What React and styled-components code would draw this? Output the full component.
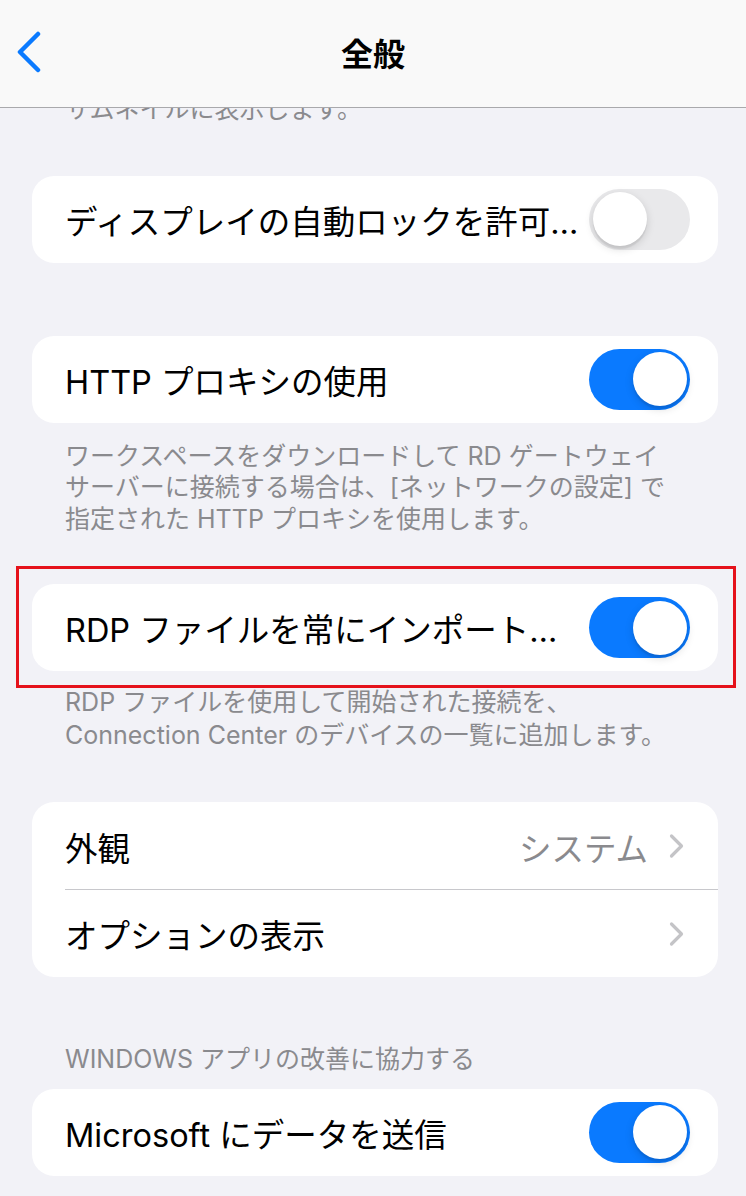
import React from "react";
import styled, { createGlobalStyle } from "styled-components";

const Global = createGlobalStyle`
  html, body { margin: 0; padding: 0; background: #f2f2f7; }
  body { font-family: "Inter", "Noto Sans CJK JP", sans-serif; -webkit-font-smoothing: antialiased; }
  * { box-sizing: border-box; }
`;

const Page = styled.div`
  width: 746px;
  height: 1196px;
  display: flex;
  flex-direction: column;
  background: #f2f2f7;
  overflow: hidden;
`;

const NavBar = styled.header`
  height: 108px;
  flex: none;
  display: grid;
  grid-template-columns: 80px 1fr 80px;
  align-items: center;
  background: #f9f9f9;
  border-bottom: 1px solid #a9a9ac;
  padding-bottom: 4px;
`;

const BackButton = styled.button`
  border: 0;
  background: none;
  padding: 0 0 0 16px;
  display: flex;
  align-items: center;
  height: 40px;
  cursor: pointer;
`;

const Title = styled.h1`
  margin: 0;
  text-align: center;
  font-size: 32px;
  font-weight: 700;
  color: #000;
  letter-spacing: 0;
`;

const Content = styled.main`
  flex: 1;
  overflow: hidden;
  display: flex;
  flex-direction: column;
  padding: 0 28px 0 32px;
`;

const Card = styled.section`
  background: #fff;
  border-radius: 22px;
  display: flex;
  flex-direction: column;
  margin-top: ${(p) => p.$mt ?? 0}px;
  overflow: hidden;
`;

const Row = styled.div`
  height: ${(p) => (p.$divider ? 88 : 87)}px;
  display: flex;
  align-items: center;
  padding: 0 ${(p) => (p.$chevron ? 33 : 28)}px 0 33px;
  position: relative;
  ${(p) =>
    p.$divider &&
    `&::after { content: ""; position: absolute; left: 33px; right: 0; bottom: 0; height: 1px; background: #c8c8cc; }`}
`;

const Label = styled.span`
  flex: 1;
  min-width: 0;
  font-size: 32.5px;
  color: #000;
  white-space: nowrap;
  overflow: hidden;
`;

const Value = styled.span`
  font-size: 32.5px;
  color: #8a8a8e;
  margin-right: 20px;
  white-space: nowrap;
`;

const Track = styled.div`
  flex: none;
  width: 101px;
  height: 61px;
  border-radius: 31px;
  background: ${(p) => (p.$on ? "#0a7aff" : "#e9e9eb")};
  padding: 3.5px;
  display: flex;
  justify-content: ${(p) => (p.$on ? "flex-end" : "flex-start")};
`;

const Knob = styled.div`
  width: 54px;
  height: 54px;
  border-radius: 50%;
  background: #fff;
  box-shadow: 0 3px 8px rgba(0, 0, 0, 0.15), 0 3px 1px rgba(0, 0, 0, 0.06);
`;

const Footnote = styled.p`
  margin: ${(p) => p.$mt ?? 0}px 0 0 0;
  padding: 0 20px 0 33px;
  font-size: 25px;
  line-height: ${(p) => p.$lh ?? 31.5}px;
  color: #8a8a8e;
`;

const SectionHeader = styled.h2`
  margin: ${(p) => p.$mt}px 0 0 0;
  padding: 0 0 0 33px;
  font-size: 25px;
  line-height: 31.5px;
  font-weight: 400;
  color: #8a8a8e;
`;

const Highlight = styled.div`
  margin: 31px -18px 0 -16px;
  border: 3px solid #e5121b;
  padding: 15px 15px 14px 13px;
`;

const Toggle = ({ on }) => (
  <Track $on={on}>
    <Knob />
  </Track>
);

const Chevron = () => (
  <svg width="17" height="26" viewBox="0 0 17 26" fill="none">
    <path d="M3.5 3 L13.5 13 L3.5 23" stroke="#c4c4c7" strokeWidth="3.2" strokeLinecap="round" strokeLinejoin="round" />
  </svg>
);

const BackChevron = () => (
  <svg width="26" height="42" viewBox="0 0 26 42" fill="none">
    <path d="M22 3 L4 21 L22 39" stroke="#0a7aff" strokeWidth="4.5" strokeLinecap="round" strokeLinejoin="round" />
  </svg>
);

export default function App() {
  return (
    <>
      <Global />
      <Page>
        <NavBar>
          <BackButton aria-label="戻る">
            <BackChevron />
          </BackButton>
          <Title>全般</Title>
          <span />
        </NavBar>
        <Content>
          <Footnote $mt={-14}>サムネイルに表示します。</Footnote>

          <Card $mt={50}>
            <Row>
              <Label>ディスプレイの自動ロックを許可…</Label>
              <Toggle on={false} />
            </Row>
          </Card>

          <Card $mt={73}>
            <Row>
              <Label>HTTP プロキシの使用</Label>
              <Toggle on />
            </Row>
          </Card>
          <Footnote $mt={18}>
            ワークスペースをダウンロードして RD ゲートウェイ
            <br />
            サーバーに接続する場合は、[ネットワークの設定] で
            <br />
            指定された HTTP プロキシを使用します。
          </Footnote>

          <Highlight>
            <Card>
              <Row>
                <Label>RDP ファイルを常にインポート…</Label>
                <Toggle on />
              </Row>
            </Card>
          </Highlight>
          <Footnote $mt={-2} $lh={33}>
            RDP ファイルを使用して開始された接続を、
            <br />
            Connection Center のデバイスの一覧に追加します。
          </Footnote>

          <Card $mt={50}>
            <Row $chevron $divider>
              <Label>外観</Label>
              <Value>システム</Value>
              <Chevron />
            </Row>
            <Row $chevron>
              <Label>オプションの表示</Label>
              <Chevron />
            </Row>
          </Card>

          <SectionHeader $mt={67}>WINDOWS アプリの改善に協力する</SectionHeader>
          <Card $mt={13}>
            <Row>
              <Label>Microsoft にデータを送信</Label>
              <Toggle on />
            </Row>
          </Card>
        </Content>
      </Page>
    </>
  );
}
